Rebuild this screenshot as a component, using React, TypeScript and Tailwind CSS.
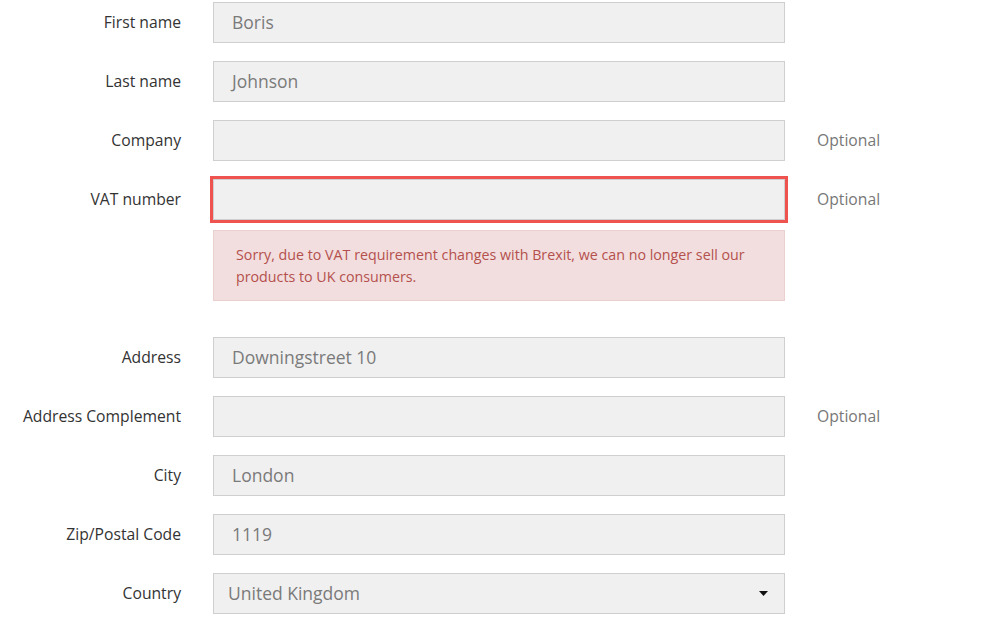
import React from "react";

type Field = { label: string; value?: string; optional?: boolean; error?: boolean };

const topFields: Field[] = [
  { label: "First name", value: "Boris" },
  { label: "Last name", value: "Johnson" },
  { label: "Company", optional: true },
  { label: "VAT number", optional: true, error: true },
];

const bottomFields: Field[] = [
  { label: "Address", value: "Downingstreet 10" },
  { label: "Address Complement", optional: true },
  { label: "City", value: "London" },
  { label: "Zip/Postal Code", value: "1119" },
];

function Row({ field }: { field: Field }) {
  return (
    <div className="flex items-center">
      <label className="w-[181px] text-right text-[15.7px] text-[#333]">{field.label}</label>
      <div
        className={`ml-[32px] w-[572px] h-[41px] flex items-center px-[18px] bg-[#f0f0f0] border border-[#cfcfcf] text-[17.5px] text-[#7a7a7a] ${
          field.error ? "outline-[3px] outline-solid outline-[#ef5350]" : ""
        }`}
      >
        {field.value}
      </div>
      {field.optional && <span className="ml-[32px] text-[15.7px] text-[#777]">Optional</span>}
    </div>
  );
}

export default function App() {
  return (
    <div className="w-[1000px] h-[630px] bg-white overflow-hidden pt-[2px]" style={{ fontFamily: '"Open Sans", sans-serif' }}>
      <div className="flex flex-col gap-[18px]">
        {topFields.map((f) => (
          <Row key={f.label} field={f} />
        ))}
      </div>
      <div className="ml-[213px] mt-[10px] w-[572px] h-[71px] bg-[#f2dede] border border-[#ebd0d0] px-[22px] pt-[13px] text-[14.25px] leading-[22px] text-[#b4504d]">
        Sorry, due to VAT requirement changes with Brexit, we can no longer sell our products to UK consumers.
      </div>
      <div className="mt-[36px] flex flex-col gap-[18px]">
        {bottomFields.map((f) => (
          <Row key={f.label} field={f} />
        ))}
        <div className="flex items-center">
          <label className="w-[181px] text-right text-[15.7px] text-[#333]">Country</label>
          <div className="ml-[32px] w-[572px] h-[41px] flex items-center justify-between pl-[14px] pr-[16px] bg-[#f0f0f0] border border-[#cfcfcf] text-[17.5px] text-[#7a7a7a]">
            <span>United Kingdom</span>
            <svg width="9" height="5" viewBox="0 0 9 5">
              <path d="M0 0h9L4.5 5z" fill="#111" />
            </svg>
          </div>
        </div>
      </div>
    </div>
  );
}
